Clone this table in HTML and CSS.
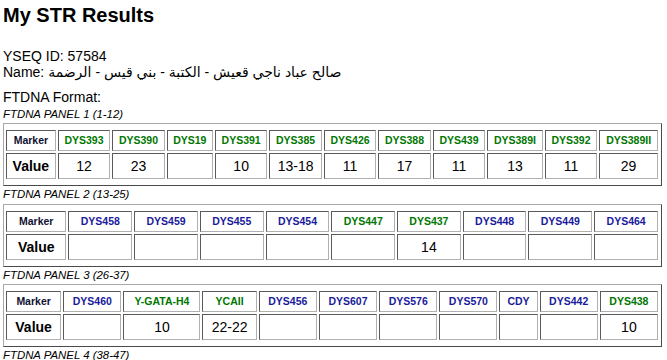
FILE: index.html
```html
<!DOCTYPE html>
<html>
<head>
<meta charset="utf-8">
<title>My STR Results</title>
<link rel="stylesheet" href="styles.css">
</head>
<body>
<h1 class="title">My STR Results</h1>
<div class="info">
  <div>YSEQ ID: 57584</div>
  <div>Name: صالح عباد ناجي قعيش - الكتبة - بني قيس - الرضمة</div>
</div>
<div class="format">FTDNA Format:</div>

<div class="label">FTDNA PANEL 1 (1-12)</div>
<div class="panel">
  <table class="str">
    <tr>
      <th class="mk">Marker</th>
      <th class="g">DYS393</th><th class="g">DYS390</th><th class="g">DYS19</th><th class="g">DYS391</th><th class="g">DYS385</th><th class="g">DYS426</th><th class="g">DYS388</th><th class="g">DYS439</th><th class="g">DYS389I</th><th class="g">DYS392</th><th class="g">DYS389II</th>
    </tr>
    <tr>
      <td class="vl">Value</td>
      <td>12</td><td>23</td><td></td><td>10</td><td>13-18</td><td>11</td><td>17</td><td>11</td><td>13</td><td>11</td><td>29</td>
    </tr>
  </table>
</div>

<div class="label">FTDNA PANEL 2 (13-25)</div>
<div class="panel">
  <table class="str">
    <tr>
      <th class="mk">Marker</th>
      <th class="b">DYS458</th><th class="b">DYS459</th><th class="b">DYS455</th><th class="b">DYS454</th><th class="g">DYS447</th><th class="g">DYS437</th><th class="b">DYS448</th><th class="b">DYS449</th><th class="b">DYS464</th>
    </tr>
    <tr>
      <td class="vl">Value</td>
      <td></td><td></td><td></td><td></td><td></td><td>14</td><td></td><td></td><td></td>
    </tr>
  </table>
</div>

<div class="label">FTDNA PANEL 3 (26-37)</div>
<div class="panel">
  <table class="str">
    <tr>
      <th class="mk">Marker</th>
      <th class="b">DYS460</th><th class="g">Y-GATA-H4</th><th class="g">YCAII</th><th class="b">DYS456</th><th class="b">DYS607</th><th class="b">DYS576</th><th class="b">DYS570</th><th class="b">CDY</th><th class="b">DYS442</th><th class="g">DYS438</th>
    </tr>
    <tr>
      <td class="vl">Value</td>
      <td></td><td>10</td><td>22-22</td><td></td><td></td><td></td><td></td><td></td><td></td><td>10</td>
    </tr>
  </table>
</div>

<div class="label">FTDNA PANEL 4 (38-47)</div>
</body>
</html>
```

FILE: styles.css
```css
html, body {
  background: #ffffff;
}
body {
  margin: 0;
  padding: 4px 5px 0 3px;
  font-family: "Liberation Sans", Arial, "DejaVu Sans", sans-serif;
  font-size: 14px;
  line-height: 16px;
  color: #000000;
}
.title {
  margin: 0;
  font-size: 20px;
  line-height: 23px;
  font-weight: bold;
}
.info {
  margin-top: 21px;
}
.format {
  margin-top: 9px;
  margin-bottom: 2.5px;
}
.label {
  margin: 2px 0;
  font-size: 11.4px;
  line-height: 13.5px;
  font-style: italic;
}
.panel {
  border: 1px solid;
  border-color: #a8a8a8 #4a4a4a #4a4a4a #a8a8a8;
  padding: 4px 1px 4px 0;
}
.str {
  width: 100%;
  border-collapse: separate;
  border-spacing: 2px;
}
.str th, .str td {
  border: 1px solid;
  border-color: #5a5a5a #b0b0b0 #b0b0b0 #5a5a5a;
  text-align: center;
  white-space: nowrap;
}
.str th {
  font-size: 10.5px;
  line-height: 12px;
  padding: 3px 4px 4px;
  font-weight: bold;
}
.str td {
  font-size: 14px;
  line-height: 16px;
  padding: 4px 4px;
}
.str .mk {
  color: #101030;
}
.str .vl {
  font-weight: bold;
}
.str .g {
  color: #007700;
}
.str .b {
  color: #1a1a9c;
}
```
